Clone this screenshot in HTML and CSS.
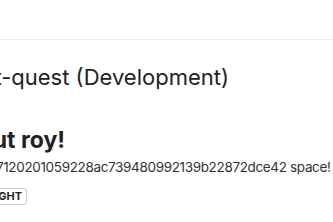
FILE: index.html
```html
<html lang="en">
<head>
  <meta charset="UTF-8" />
  <meta name="viewport" content="width=device-width, initial-scale=1.0" />
  <title>Quest</title>
  <link rel="stylesheet" href="styles.css">
</head>
<body>
  <div class="topbar"></div>
  <div class="page">
    <h2 class="project">test-quest (Development)</h2>
    <h1 class="greeting">About roy!</h1>
    <p class="address">0x397120201059228ac739480992139b22872dce42 space!</p>
    <button class="theme-btn">LIGHT</button>
  </div>
</body>
</html>
```

FILE: styles.css
```css
body {
  margin: 0;
  font-family: 'Inter', 'Liberation Sans', sans-serif;
  background: #fff;
  color: #222;
  overflow: hidden;
}

.topbar {
  height: 39px;
  border-bottom: 1px solid #ececec;
}

.page {
  white-space: nowrap;
}

.project {
  margin: 23px 0 0 -37px;
  font-size: 22px;
  font-weight: 400;
  line-height: 28px;
}

.greeting {
  margin: 35px 0 0 -53px;
  font-size: 23px;
  font-weight: 700;
  line-height: 28px;
}

.address {
  margin: 4px 0 0 -35px;
  font-size: 13.5px;
  letter-spacing: -0.35px;
  line-height: 18px;
  color: #333;
}

.theme-btn {
  display: block;
  margin: 12px 0 0 -16px;
  padding: 2px 4px;
  font-family: inherit;
  font-size: 11px;
  font-weight: 700;
  line-height: 11px;
  color: #222;
  background: #fff;
  border: 1px solid #ccc;
  border-radius: 3px;
}
```
